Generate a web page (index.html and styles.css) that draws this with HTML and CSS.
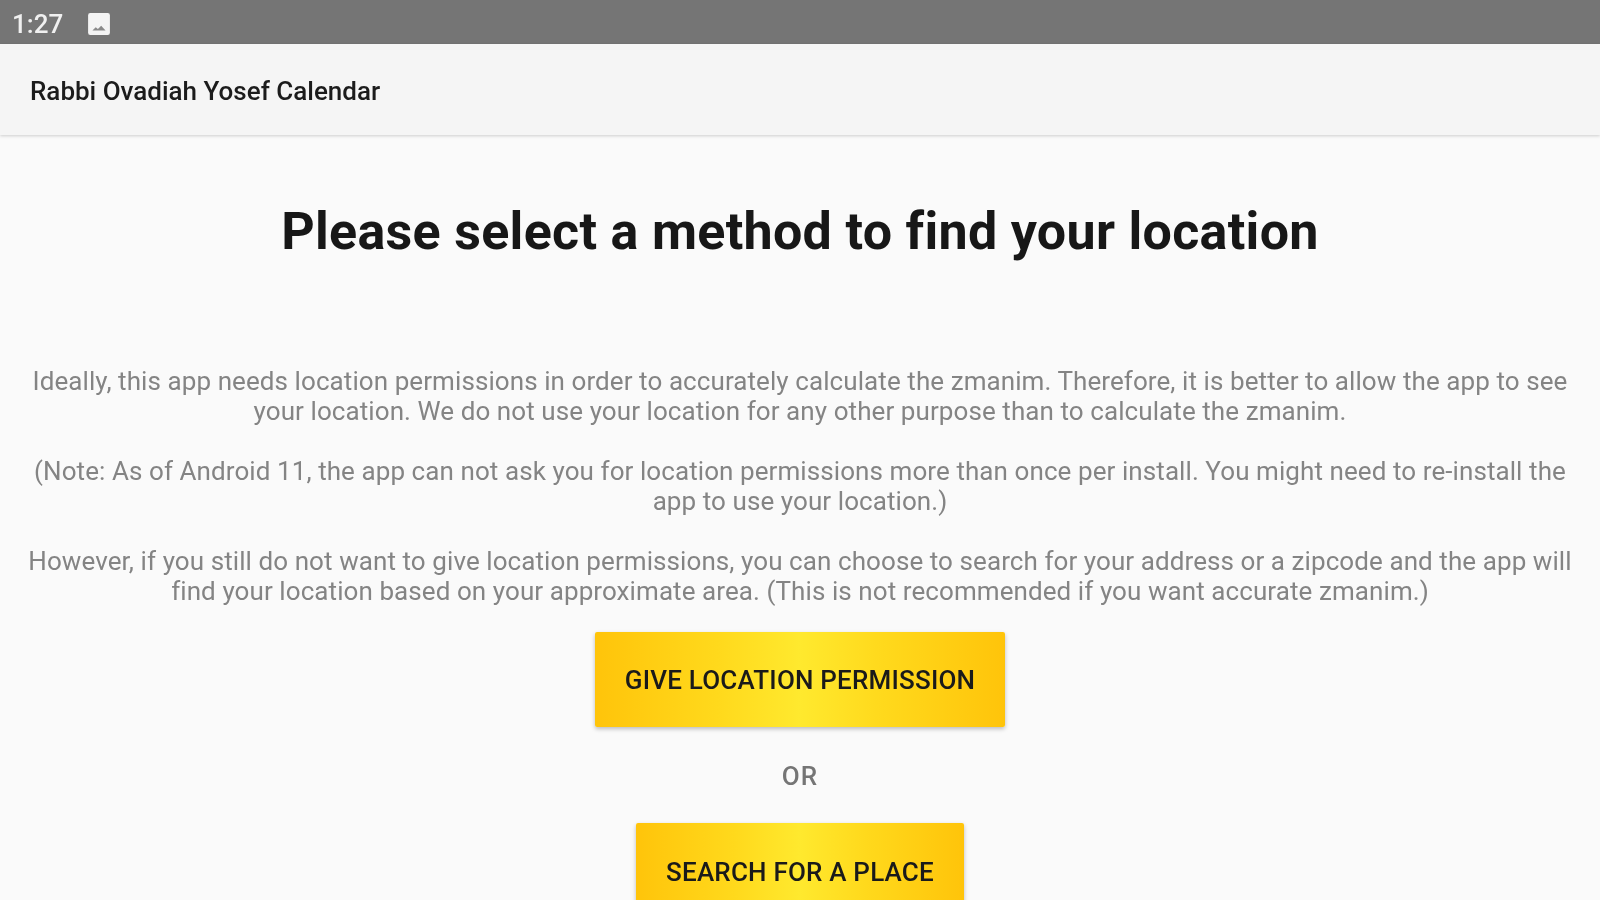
FILE: index.html
```html
<!DOCTYPE html>
<html lang="en">
<head>
<meta charset="utf-8">
<title>Rabbi Ovadiah Yosef Calendar</title>
<link rel="stylesheet" href="styles.css">
</head>
<body>
<div class="page">
<div class="status-bar">
  <span class="clock">1:27</span>
  <svg class="status-icon" width="24" height="24" viewBox="0 0 22 22"><path fill="#f4f4f4" d="M3 1h16a2 2 0 0 1 2 2v16a2 2 0 0 1-2 2H3a2 2 0 0 1-2-2V3a2 2 0 0 1 2-2z"/><path fill="#8a8a8a" d="M5 17l3-3 2 1.500 3-3 4 4.500z"/></svg>
</div>
<header class="toolbar">Rabbi Ovadiah Yosef Calendar</header>
<main class="content">
  <h1 class="title">Please select a method to find your location</h1>
  <div class="notes">
    <p class="note">Ideally, this app needs location permissions in order to accurately calculate the zmanim. Therefore, it is better to allow the app to see your location. We do not use your location for any other purpose than to calculate the zmanim.</p>
    <p class="note">(Note: As of Android 11, the app can not ask you for location permissions more than once per install. You might need to re-install the app to use your location.)</p>
    <p class="note">However, if you still do not want to give location permissions, you can choose to search for your address or a zipcode and the app will find your location based on your approximate area. (This is not recommended if you want accurate zmanim.)</p>
  </div>
  <button class="action action-wide">GIVE LOCATION PERMISSION</button>
  <div class="or">OR</div>
  <button class="action action-narrow">SEARCH FOR A PLACE</button>
</main>
</div>
</body>
</html>
```
FILE: styles.css
```css
html, body {
  margin: 0;
  height: 900px;
  overflow: hidden;
  background: #fafafa;
  font-family: Roboto, "Liberation Sans", sans-serif;
}
.page {
  height: 900px;
  filter: blur(.5px);
}
.status-bar {
  height: 44px;
  box-sizing: border-box;
  background: #757575;
  display: flex;
  align-items: center;
  gap: 24px;
  padding: 3px 0 0 12px;
  box-shadow: 0 1px 2px rgba(0,0,0,.4);
}
.clock {
  color: #f0f0f0;
  font-size: 26px;
  font-weight: 500;
}
.toolbar {
  height: 91px;
  box-sizing: border-box;
  background: #f5f5f5;
  color: #1c1c1c;
  font-size: 26px;
  font-weight: 500;
  display: flex;
  align-items: center;
  padding: 3px 0 0 30px;
  box-shadow: 0 1px 3px rgba(0,0,0,.18);
}
.content {
  display: flex;
  flex-direction: column;
  align-items: center;
}
.title {
  margin: 69px 0 0;
  font-size: 52px;
  line-height: 56px;
  font-weight: 700;
  letter-spacing: .3px;
  color: #171717;
  text-align: center;
}
.notes {
  margin-top: 106px;
  width: 1560px;
}
.note {
  margin: 0 0 30px;
  font-size: 26px;
  line-height: 30px;
  letter-spacing: .08px;
  color: #848484;
  text-align: center;
}
.note:last-child {
  margin-bottom: 26px;
}
.action {
  border: 0;
  border-radius: 2px;
  height: 95px;
  font: 500 26px Roboto, "Liberation Sans", sans-serif;
  letter-spacing: .2px;
  color: #1a1a1a;
  background: linear-gradient(90deg, #ffc40a, #ffd91c 30%, #ffe92e 50%, #ffd91c 70%, #ffc40a);
  box-shadow: 0 2px 4px rgba(0,0,0,.25);
  padding: 0;
}
.action-wide { width: 410px; }
.action-narrow { width: 328px; padding-top: 3px; }
.or {
  margin: 34px 0 32px;
  font-size: 26px;
  font-weight: 500;
  line-height: 30px;
  letter-spacing: 1px;
  color: #757575;
}
```
